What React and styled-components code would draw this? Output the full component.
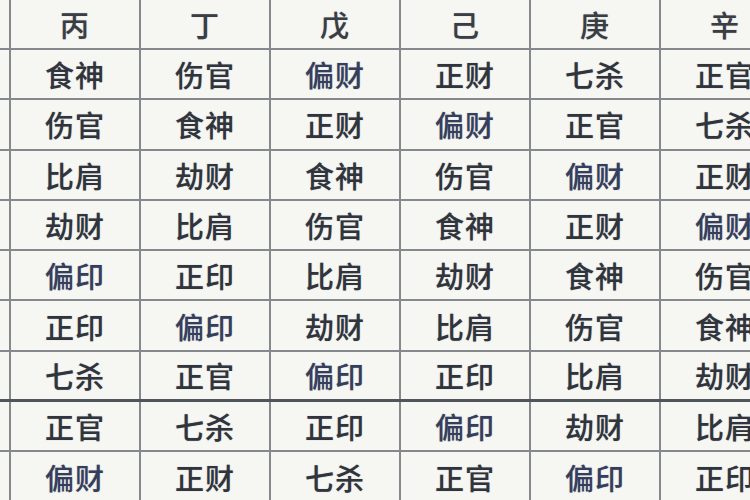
import React from 'react';
import styled, { createGlobalStyle } from 'styled-components';

const GlobalStyle = createGlobalStyle`
  html, body {
    margin: 0;
    padding: 0;
    background: #f6f6f2;
  }
  body {
    font-family: "Noto Sans CJK SC", "Noto Sans", sans-serif;
  }
`;

const STEMS = ['丙', '丁', '戊', '己', '庚', '辛'];

const ROWS = [
  ['食神', '伤官', '偏财', '正财', '七杀', '正官'],
  ['伤官', '食神', '正财', '偏财', '正官', '七杀'],
  ['比肩', '劫财', '食神', '伤官', '偏财', '正财'],
  ['劫财', '比肩', '伤官', '食神', '正财', '偏财'],
  ['偏印', '正印', '比肩', '劫财', '食神', '伤官'],
  ['正印', '偏印', '劫财', '比肩', '伤官', '食神'],
  ['七杀', '正官', '偏印', '正印', '比肩', '劫财'],
  ['正官', '七杀', '正印', '偏印', '劫财', '比肩'],
  ['偏财', '正财', '七杀', '正官', '偏印', '正印'],
];

const Sheet = styled.div`
  width: 750px;
  height: 500px;
  overflow: hidden;
  background: #f6f6f2;
  display: flex;
  flex-direction: column;
`;

const Row = styled.div`
  display: grid;
  grid-template-columns: 11px repeat(6, 130px);
  flex: 0 0 auto;
  height: ${p => (p.$head ? 50 : 50.3)}px;
  box-sizing: border-box;
  border-bottom: ${p => (p.$thick ? '3px solid #50555c' : '2px solid #85888d')};
`;

const Cell = styled.div`
  box-sizing: border-box;
  border-right: 2px solid #85888d;
  display: flex;
  align-items: center;
  justify-content: center;
  overflow: hidden;
  white-space: nowrap;
  font-size: 29px;
  font-weight: 500;
  letter-spacing: 1px;
  color: ${p => (p.$blue ? '#363e5e' : p.$head ? '#3a3d44' : '#30343c')};
  text-shadow: 0 0 1px rgba(60, 64, 80, 0.45);
`;

const Stub = styled(Cell)`
  font-size: 0;
`;

export default function App() {
  return (
    <>
      <GlobalStyle />
      <Sheet>
        <Row $head>
          <Stub />
          {STEMS.map(s => (
            <Cell key={s} $head>{s}</Cell>
          ))}
        </Row>
        {ROWS.map((r, i) => (
          <Row key={i} $thick={i === 6}>
            <Stub />
            {r.map((g, j) => (
              <Cell key={j} $blue={g[0] === '偏'}>{g}</Cell>
            ))}
          </Row>
        ))}
      </Sheet>
    </>
  );
}
